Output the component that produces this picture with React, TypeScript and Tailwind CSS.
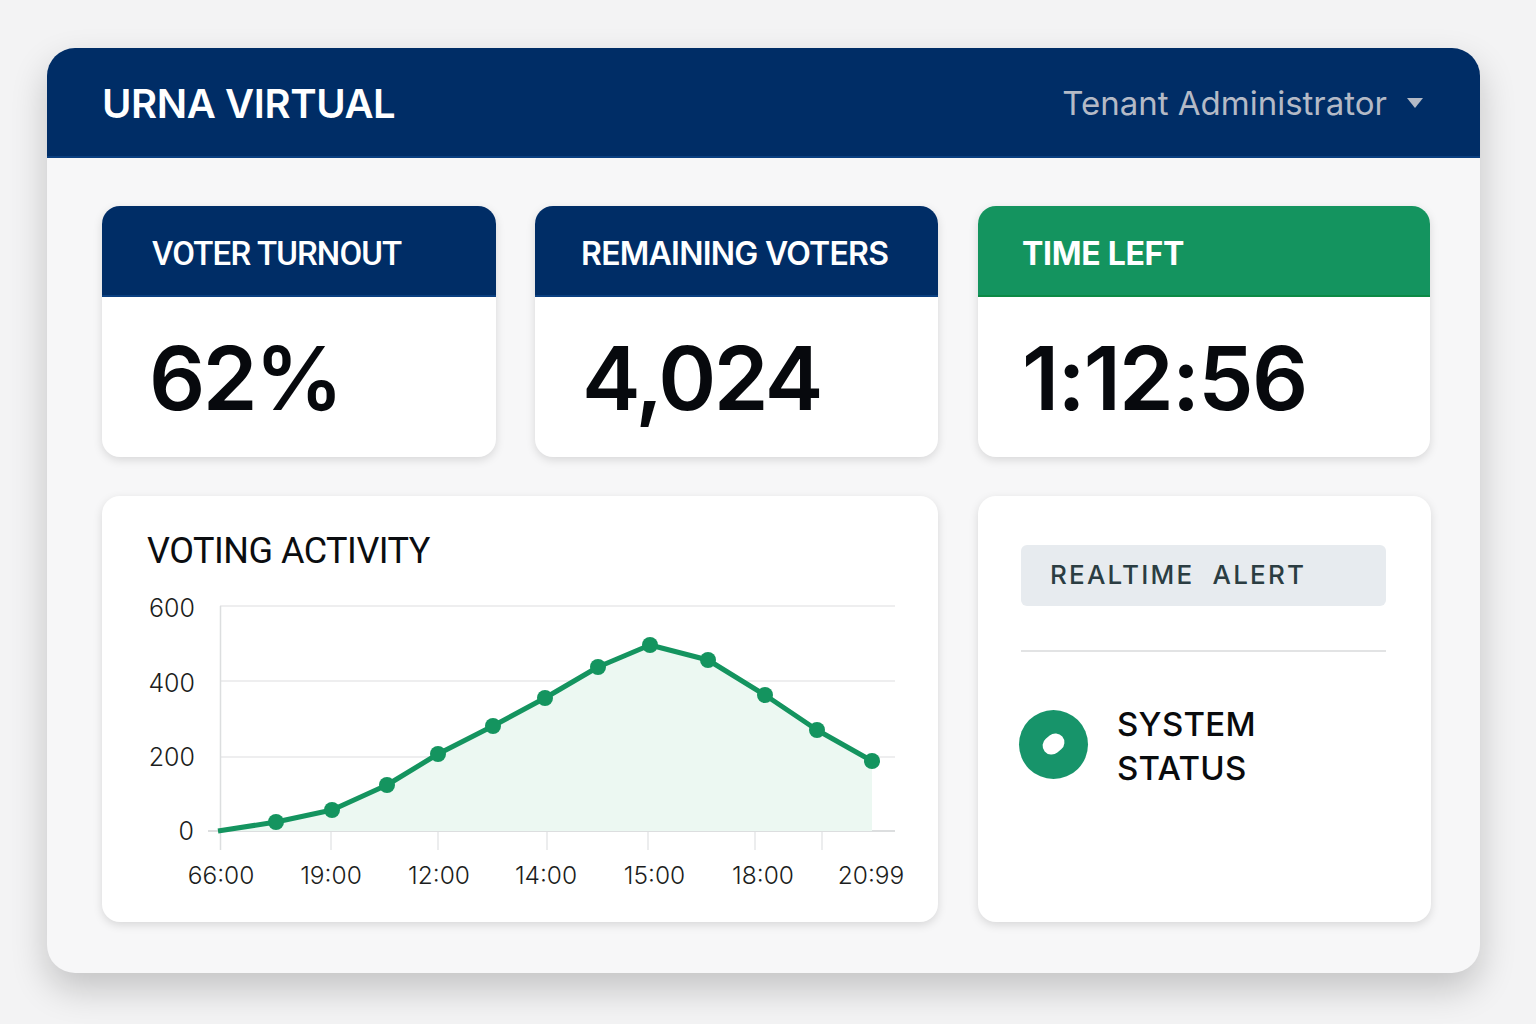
const font = { fontFamily: "Inter, 'Liberation Sans', sans-serif" };
const roboto = { fontFamily: "Roboto, 'Liberation Sans', sans-serif" };

const pts: [number, number][] = [
  [218, 831], [276, 822], [332, 810], [387, 785], [438, 754], [493, 726], [545, 698],
  [598, 667], [650, 645], [708, 660], [765, 695], [817, 730], [872, 761],
];
const line = pts.map((p) => p.join(",")).join(" ");
const area = `${line} 872,831 218,831`;

function Stat({ title, value, head, w, tx, vx, titleClass, valueClass, useRoboto }: { title: string; value: string; head: string; w: string; tx: string; vx: string; titleClass: string; valueClass: string; useRoboto?: boolean }) {
  return (
    <div className={`${w} h-[251px] bg-white rounded-[18px] shadow-[0_3px_10px_rgba(0,0,0,0.13)] overflow-hidden flex flex-col`}>
      <div className={`${head} ${tx} h-[91px] shrink-0 flex items-center text-white`}>
        <span style={useRoboto ? roboto : font} className={`${titleClass} mt-[6px]`}>{title}</span>
      </div>
      <div className={`${vx} ${valueClass} flex-1 flex items-center text-[#07090d] text-[88px] font-semibold leading-none`}>
        {value}
      </div>
    </div>
  );
}

export default function App() {
  return (
    <div style={font} className="w-[1536px] h-[1024px] bg-[#f3f3f4] pt-[48px] pl-[47px] overflow-hidden">
      <div className="w-[1433px] h-[925px] bg-[#f7f7f8] rounded-[28px] shadow-[0_16px_36px_rgba(0,0,0,0.2)] overflow-hidden">
        <header className="h-[110px] bg-[#002d66] border-b-2 border-[#0a3f80] pl-[55px] pr-[57px] flex items-center justify-between">
          <div className="text-white text-[40px] font-semibold tracking-[-0.4px] mt-[4px]">URNA VIRTUAL</div>
          <div className="flex items-center gap-[20px] mt-[4px]">
            <span className="text-[#b4bac6] text-[33px]">Tenant Administrator</span>
            <svg width="16" height="10" viewBox="0 0 16 10" className="mb-[3px]"><path d="M0 0H16L8 10Z" fill="#b4bac6" /></svg>
          </div>
        </header>
        <div className="pl-[55px] pt-[48px]">
          <div className="flex">
            <Stat useRoboto title="VOTER TURNOUT" value="62%" head="bg-[#002d66] border-b-2 border-[#0a3f80]" w="w-[394px]" tx="pl-[50px]" vx="pl-[47px]" titleClass="text-[33px] font-medium tracking-[-0.85px]" valueClass="tracking-[-2.6px] pt-[1px]" />
            <div className="w-[39px]" />
            <Stat title="REMAINING VOTERS" value="4,024" head="bg-[#002d66] border-b-2 border-[#0a3f80]" w="w-[403px]" tx="pl-[46px]" vx="pl-[47px]" titleClass="text-[32px] font-semibold tracking-[-0.75px]" valueClass="tracking-[-2.5px] pt-[1px]" />
            <div className="w-[40px]" />
            <Stat title="TIME LEFT" value="1:12:56" head="bg-[#14945f] border-b-2 border-[#0c8a45]" w="w-[452px]" tx="pl-[44px]" vx="pl-[44px]" titleClass="text-[32px] font-bold tracking-[-0.3px]" valueClass="tracking-[-1.8px] pt-[1px]" />
          </div>
          <div className="flex mt-[39px]">
            <section className="w-[836px] h-[426px] bg-white rounded-[18px] shadow-[0_3px_10px_rgba(0,0,0,0.13)] overflow-hidden">
              <h2 style={roboto} className="pl-[45px] pt-[34px] h-[96px] text-[#0b0d10] text-[36px] leading-[42px] font-normal tracking-[-0.5px]">VOTING ACTIVITY</h2>
              <svg width="836" height="330" viewBox="102 592 836 330" className="block" style={font}>
                {[606, 681, 757].map((y) => (
                  <line key={y} x1="220" x2="895" y1={y} y2={y} stroke="#e8e9ea" strokeWidth="1.5" />
                ))}
                <line x1="208" x2="895" y1="831" y2="831" stroke="#dcdedf" strokeWidth="2" />
                <line x1="220.5" x2="220.5" y1="606" y2="850" stroke="#dcdedf" strokeWidth="1.5" />
                {[331, 438, 547, 648, 755, 822].map((x) => (
                  <line key={x} x1={x} x2={x} y1="832" y2="850" stroke="#e6e7e8" strokeWidth="1.5" />
                ))}
                <polygon points={area} fill="#ecf8f2" />
                <polyline points={line} fill="none" stroke="#14945f" strokeWidth="5" strokeLinejoin="round" />
                {pts.slice(1).map(([x, y]) => (
                  <circle key={x} cx={x} cy={y} r="8" fill="#14945f" />
                ))}
                <g fill="#1b1d20" fontSize="25" fontWeight="300" textAnchor="end">
                  <text x="195" y="617">600</text>
                  <text x="195" y="692">400</text>
                  <text x="195" y="766">200</text>
                  <text x="194" y="840">0</text>
                </g>
                <g fill="#1b1d20" fontSize="24.5" fontWeight="300" textAnchor="middle">
                  <text x="221" y="884">66:00</text>
                  <text x="331" y="884">19:00</text>
                  <text x="439" y="884">12:00</text>
                  <text x="546" y="884">14:00</text>
                  <text x="654.5" y="884">15:00</text>
                  <text x="763" y="884">18:00</text>
                  <text x="871" y="884">20:99</text>
                </g>
              </svg>
            </section>
            <div className="w-[40px]" />
            <section className="w-[453px] h-[426px] bg-white rounded-[18px] shadow-[0_3px_10px_rgba(0,0,0,0.13)] pl-[43px] pt-[49px]">
              <div className="w-[365px] h-[61px] bg-[#e7ebef] rounded-[6px] pl-[29px] pb-[2px] flex items-center text-[#2b3d42] text-[26px] font-medium tracking-[2.2px] whitespace-pre">
                REALTIME  ALERT
              </div>
              <div className="w-[365px] h-[2px] bg-[#e2e3e4] mt-[44px]" />
              <div className="flex items-center mt-[46px] -ml-[2px]">
                <div className="w-[69px] h-[69px] rounded-full bg-[#17946a] flex items-center justify-center shrink-0">
                  <div className="w-[23px] h-[18px] bg-white rounded-full -rotate-[40deg]" />
                </div>
                <div className="ml-[29px] mt-[4px] text-[#090b0d] text-[33px] leading-[44px] font-medium tracking-[0.3px]">
                  SYSTEM<br />STATUS
                </div>
              </div>
            </section>
          </div>
        </div>
      </div>
    </div>
  );
}
